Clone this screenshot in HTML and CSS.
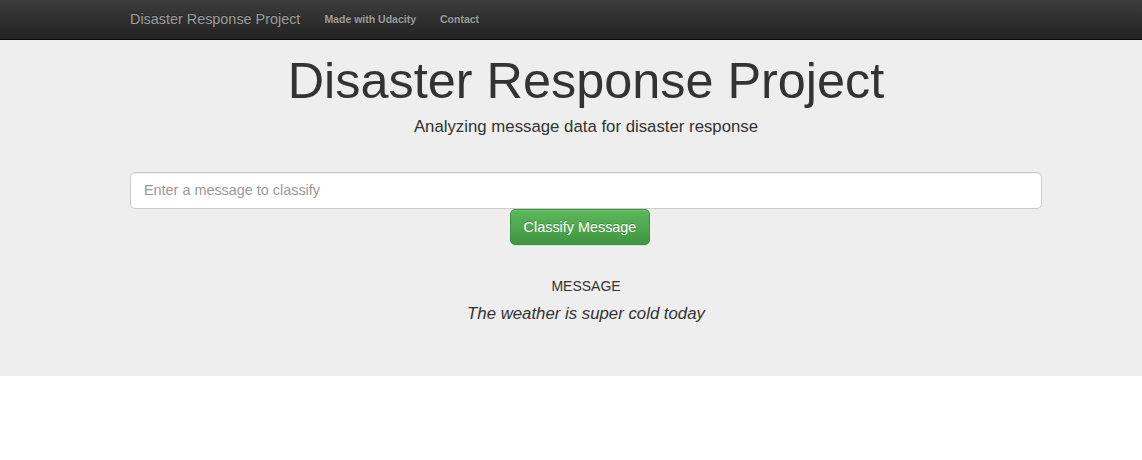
FILE: index.html
```html
<!DOCTYPE html>
<html>
<head>
<meta charset="utf-8">
<title>Disaster Response Project</title>
<link rel="stylesheet" href="styles.css">
</head>
<body>
<nav class="navbar">
  <div class="container nav-inner">
    <a class="brand" href="#">Disaster Response Project</a>
    <ul class="nav-links">
      <li><a href="#">Made with Udacity</a></li>
      <li><a href="#">Contact</a></li>
    </ul>
  </div>
</nav>
<section class="jumbotron">
  <div class="container">
    <h1 class="title">Disaster Response Project</h1>
    <p class="lead">Analyzing message data for disaster response</p>
    <form class="classify-form">
      <input class="query-input" type="text" placeholder="Enter a message to classify">
      <button class="btn-success" type="button">Classify Message</button>
    </form>
    <div class="result">
      <div class="result-label">MESSAGE</div>
      <p class="result-text">The weather is super cold today</p>
    </div>
  </div>
</section>
</body>
</html>
```

FILE: styles.css
```css
* { box-sizing: border-box; }
html, body { margin: 0; padding: 0; }
body {
  font-family: "Liberation Sans", Arial, sans-serif;
  font-size: 11.2px;
  color: #333;
  background: #fff;
}
.container {
  width: 912px;
  margin-left: 130px;
}
.navbar {
  height: 40px;
  background: linear-gradient(to bottom, #3c3c3c 0, #222 100%);
  border-bottom: 1px solid #080808;
}
.nav-inner {
  display: flex;
  align-items: center;
  height: 38px;
}
.brand {
  font-size: 14.4px;
  color: #9d9d9d;
  text-decoration: none;
  text-shadow: 0 -1px 0 rgba(0,0,0,.25);
  margin-right: 12px;
}
.nav-links {
  display: flex;
  list-style: none;
  margin: 0;
  padding: 0;
}
.nav-links a {
  display: block;
  padding: 0 12px;
  font-size: 10.5px;
  font-weight: bold;
  color: #9d9d9d;
  text-decoration: none;
  text-shadow: 0 -1px 0 rgba(0,0,0,.25);
}
.jumbotron {
  background: #eee;
  height: 336px;
  padding-top: 1px;
}
.title {
  margin: 12px 0 0;
  font-size: 50.4px;
  font-weight: 500;
  line-height: 1.1;
  text-align: center;
  color: #333;
}
.lead {
  margin: 7px 0 0;
  font-size: 16.8px;
  line-height: 1.4;
  text-align: center;
  color: #333;
}
.classify-form {
  display: flex;
  flex-direction: column;
  align-items: center;
  margin-top: 33px;
}
.query-input {
  width: 100%;
  height: 37px;
  padding: 8px 13px;
  font-family: inherit;
  font-size: 14.4px;
  color: #555;
  background: #fff;
  border: 1px solid #ccc;
  border-radius: 5px;
  box-shadow: inset 0 1px 1px rgba(0,0,0,.075);
  outline: none;
}
.query-input::placeholder { color: #999; }
.btn-success {
  width: 140px;
  height: 36px;
  margin-right: 12px;
  font-family: inherit;
  font-size: 14.4px;
  color: #fff;
  text-shadow: 0 -1px 0 rgba(0,0,0,.2);
  background: linear-gradient(to bottom, #5cb85c 0, #419641 100%);
  border: 1px solid #3e8f3e;
  border-radius: 5px;
  box-shadow: inset 0 1px 0 rgba(255,255,255,.15), 0 1px 1px rgba(0,0,0,.075);
  cursor: pointer;
}
.result {
  text-align: center;
  margin-top: 31px;
}
.result-label {
  font-size: 14px;
  line-height: 20px;
}
.result-text {
  margin: 8px 0 0;
  font-size: 16.8px;
  font-style: italic;
  line-height: 20px;
}
```
